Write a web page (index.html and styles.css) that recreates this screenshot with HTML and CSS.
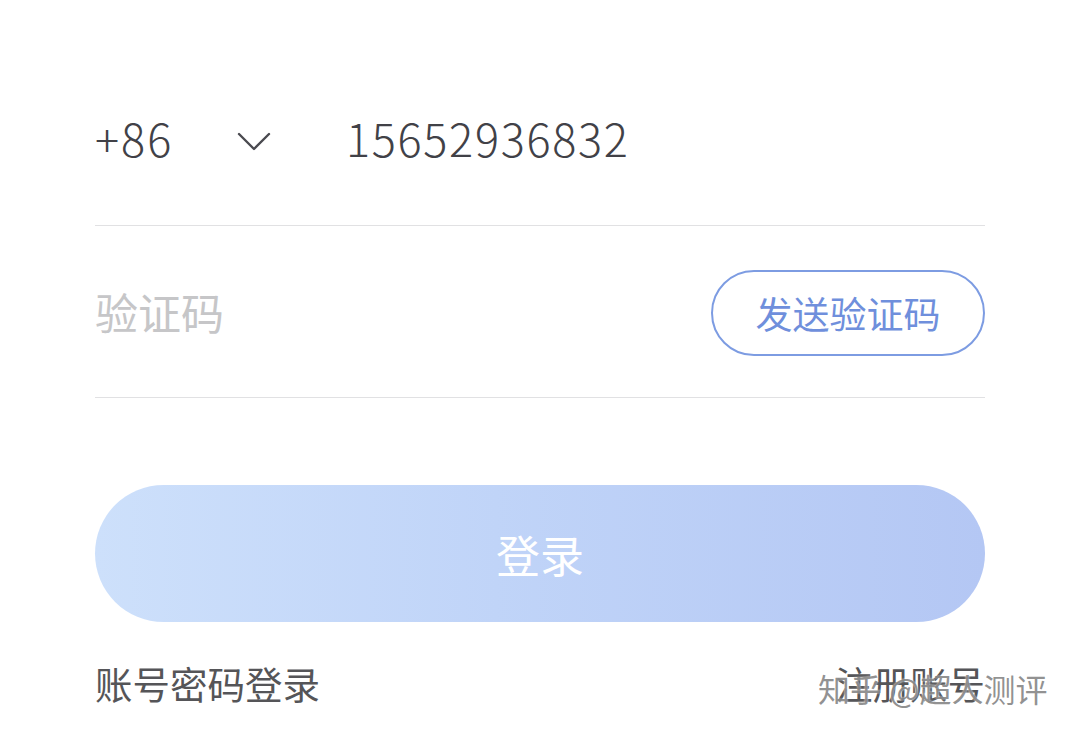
FILE: index.html
```html
<!DOCTYPE html>
<html lang="zh">
<head>
<meta charset="utf-8">
<link rel="stylesheet" href="styles.css">
</head>
<body>
<div class="page">
  <div class="form">
    <div class="row phone-row">
      <span class="code">+86</span>
      <svg class="chevron" width="34" height="22" viewBox="0 0 34 22"><path d="M2 3 L17 18 L32 3" fill="none" stroke="#4a4a50" stroke-width="2.4" stroke-linecap="round" stroke-linejoin="round"/></svg>
      <span class="phone">15652936832</span>
    </div>
    <div class="row code-row">
      <span class="placeholder">验证码</span>
      <button class="send">发送验证码</button>
    </div>
    <button class="login">登录</button>
    <div class="links">
      <span class="link">账号密码登录</span>
      <span class="link">注册账号</span>
    </div>
  </div>
  <div class="watermark">知乎 @超人测评</div>
</div>
</body>
</html>
```
FILE: styles.css
```css
html, body {
  margin: 0;
  padding: 0;
  background: #ffffff;
}
body {
  font-family: "Noto Sans CJK SC", "Noto Sans", sans-serif;
  width: 1080px;
  height: 736px;
  overflow: hidden;
}
.page {
  position: relative;
  width: 1080px;
  height: 736px;
}
.form {
  margin-left: 95px;
  width: 890px;
  display: flex;
  flex-direction: column;
}
.row {
  display: flex;
  align-items: center;
  border-bottom: 1px solid #e1e1e3;
}
.phone-row {
  padding-top: 100px;
  height: 82px;
  padding-bottom: 43px;
}
.code {
  font-size: 45px;
  font-weight: 300;
  color: #414147;
  width: 142px;
  line-height: 82px;
  margin-top: -7px;
  letter-spacing: 2px;
}
.chevron {
  margin-top: 2px;
}
.phone {
  margin-left: 75px;
  font-size: 45px;
  font-weight: 300;
  color: #414147;
  letter-spacing: 1.7px;
  line-height: 82px;
  margin-top: -7px;
}
.code-row {
  height: 171px;
  justify-content: space-between;
}
.placeholder {
  font-size: 43px;
  color: #c6c6c8;
  margin-top: -2px;
}
.send {
  width: 274px;
  height: 86px;
  border: 2.5px solid #7d9ce2;
  border-radius: 43px;
  background: #ffffff;
  color: #6f8fdc;
  font-family: "Noto Sans CJK SC", sans-serif;
  font-size: 37px;
  padding: 0;
  margin-top: 3px;
}
.login {
  margin-top: 87px;
  height: 137px;
  width: 890px;
  border: none;
  border-radius: 69px;
  background: linear-gradient(90deg, #cde0fb 0%, #c0d4f8 45%, #b4c7f4 100%);
  color: #ffffff;
  font-family: "Noto Sans CJK SC", sans-serif;
  font-size: 44px;
  padding: 0;
}
.links {
  margin-top: 41px;
  display: flex;
  justify-content: space-between;
}
.link {
  font-size: 37.5px;
  line-height: 40px;
  color: #555558;
}
.watermark {
  position: absolute;
  left: 818px;
  top: 668px;
  font-size: 32px;
  line-height: 40px;
  color: rgba(110, 110, 110, 0.75);
  text-shadow: 0 0 2px #ffffff;
  white-space: nowrap;
}
```
